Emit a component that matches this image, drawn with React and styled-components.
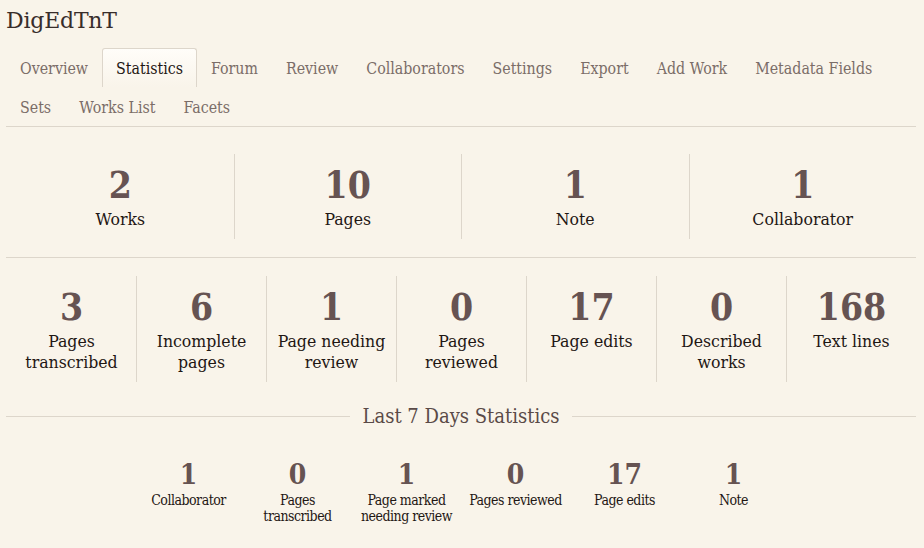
import React from 'react';
import styled, { createGlobalStyle } from 'styled-components';

const GlobalStyle = createGlobalStyle`
  html, body {
    margin: 0;
    padding: 0;
    background: #f9f4ea;
  }
  body {
    font-family: "DejaVu Serif", "Liberation Serif", serif;
    color: #2a1f1c;
  }
`;

const Page = styled.div`
  padding: 0 8px 0 6px;
  width: 910px;
`;

const Title = styled.h1`
  margin: 0;
  padding-top: 8px;
  height: 40px;
  font-size: 22px;
  font-weight: 400;
  color: #382d2a;
  letter-spacing: -0.2px;
`;

const Tabs = styled.ul`
  list-style: none;
  margin: 0;
  padding: 0;
  display: flex;
  flex-wrap: wrap;
  border-bottom: 1px solid #ddd6cb;
`;

const Tab = styled.li`
  height: 38px;
  display: flex;
  align-items: center;
  padding: 0 13px;
  font-family: "DejaVu Serif Condensed", "DejaVu Serif", serif;
  font-size: 15.8px;
  color: ${(p) => (p.active ? '#1f1714' : '#7b6d68')};
  border: 1px solid ${(p) => (p.active ? '#ddd6cb' : 'transparent')};
  border-bottom: none;
  border-radius: 3px 3px 0 0;
  background: ${(p) => (p.active ? 'linear-gradient(#fffdf9, #f9f4ea)' : 'transparent')};
`;

const BigRow = styled.div`
  display: grid;
  grid-template-columns: repeat(${(p) => p.cols}, 1fr);
  padding: ${(p) => p.pad};
  border-bottom: 1px solid ${(p) => (p.ruled ? '#ddd6cb' : 'transparent')};
`;

const BigCell = styled.div`
  display: flex;
  flex-direction: column;
  align-items: center;
  text-align: center;
  height: ${(p) => p.h}px;
  border-left: 1px solid ${(p) => (p.first ? 'transparent' : '#ddd6cb')};
`;

const Number = styled.div`
  font-family: "DejaVu Serif Condensed", "DejaVu Serif", serif;
  font-size: 37px;
  font-weight: 700;
  line-height: 44px;
  color: #665352;
  margin-top: 9px;
`;

const Label = styled.div`
  margin-top: 2px;
  font-family: "DejaVu Serif Condensed", "DejaVu Serif", serif;
  font-size: 17.5px;
  line-height: 21px;
  color: #1f1714;
  max-width: 120px;
`;

const Heading = styled.div`
  display: flex;
  align-items: center;
  gap: 12px;
  margin-top: 21px;
  font-family: "DejaVu Serif Condensed", "DejaVu Serif", serif;
  font-size: 20px;
  color: #5a4a47;
  &::before, &::after {
    content: '';
    flex: 1;
    height: 1px;
    background: #ddd6cb;
  }
`;

const SmallRow = styled.div`
  display: flex;
  justify-content: center;
  margin-top: 31px;
`;

const SmallCell = styled.div`
  width: 109px;
  display: flex;
  flex-direction: column;
  align-items: center;
  text-align: center;
`;

const SmallNumber = styled.div`
  font-family: "DejaVu Serif Condensed", "DejaVu Serif", serif;
  font-size: 28px;
  font-weight: 700;
  line-height: 32px;
  color: #665352;
`;

const SmallLabel = styled.div`
  width: 100px;
  margin-top: 1px;
  font-family: "DejaVu Serif Condensed", "DejaVu Serif", serif;
  font-size: 14px;
  line-height: 16px;
  letter-spacing: -0.5px;
  color: #1f1714;
`;

const tabs = ['Overview', 'Statistics', 'Forum', 'Review', 'Collaborators', 'Settings', 'Export', 'Add Work', 'Metadata Fields', 'Sets', 'Works List', 'Facets'];

const totals = [
  ['2', 'Works'],
  ['10', 'Pages'],
  ['1', 'Note'],
  ['1', 'Collaborator'],
];

const progress = [
  ['3', 'Pages transcribed'],
  ['6', 'Incomplete pages'],
  ['1', 'Page needing review'],
  ['0', 'Pages reviewed'],
  ['17', 'Page edits'],
  ['0', 'Described works'],
  ['168', 'Text lines'],
];

const recent = [
  ['1', 'Collaborator'],
  ['0', 'Pages transcribed'],
  ['1', 'Page marked needing review'],
  ['0', 'Pages reviewed'],
  ['17', 'Page edits'],
  ['1', 'Note'],
];

export default function App() {
  return (
    <Page>
      <GlobalStyle />
      <Title>DigEdTnT</Title>
      <Tabs>
        {tabs.map((t) => (
          <Tab key={t} active={t === 'Statistics'}>{t}</Tab>
        ))}
      </Tabs>
      <BigRow cols={4} pad="27px 0 18px" ruled>
        {totals.map(([n, l], i) => (
          <BigCell key={l} first={i === 0} h={85}>
            <Number>{n}</Number>
            <Label>{l}</Label>
          </BigCell>
        ))}
      </BigRow>
      <BigRow cols={7} pad="18px 0 0">
        {progress.map(([n, l], i) => (
          <BigCell key={l} first={i === 0} h={106}>
            <Number>{n}</Number>
            <Label>{l}</Label>
          </BigCell>
        ))}
      </BigRow>
      <Heading>Last 7 Days Statistics</Heading>
      <SmallRow>
        {recent.map(([n, l]) => (
          <SmallCell key={l}>
            <SmallNumber>{n}</SmallNumber>
            <SmallLabel>{l}</SmallLabel>
          </SmallCell>
        ))}
      </SmallRow>
    </Page>
  );
}
